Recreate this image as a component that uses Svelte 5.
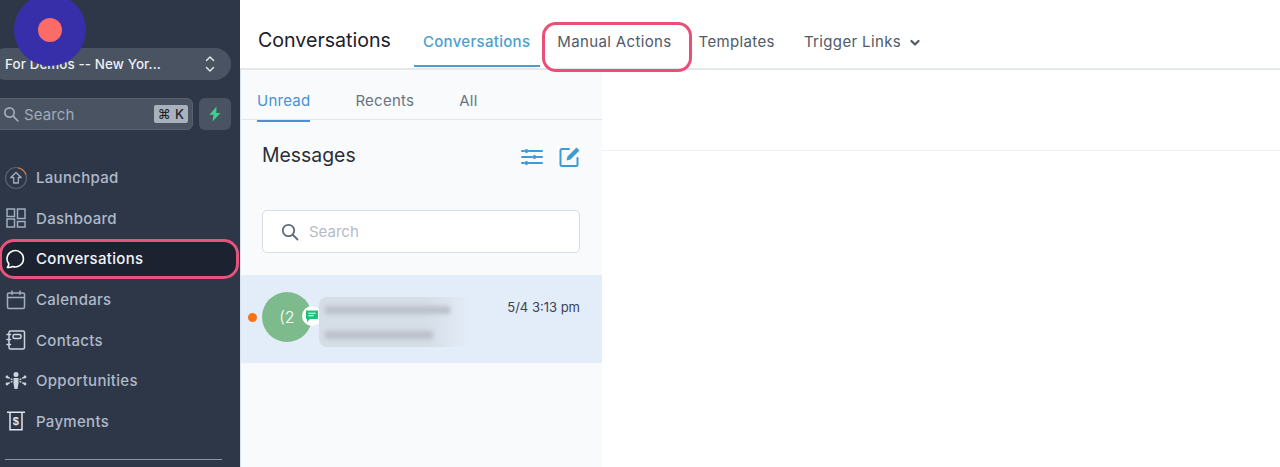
<script>
	const nav = [
		{ id: 'launchpad', label: 'Launchpad' },
		{ id: 'dashboard', label: 'Dashboard' },
		{ id: 'conversations', label: 'Conversations', active: true },
		{ id: 'calendars', label: 'Calendars' },
		{ id: 'contacts', label: 'Contacts' },
		{ id: 'opportunities', label: 'Opportunities' },
		{ id: 'payments', label: 'Payments' }
	];
	const tabs = ['Unread', 'Recents', 'All'];
</script>

<div class="page">
	<aside class="sidebar">
		<div class="switcher">
			<span class="switcher-name">For Demos -- New Yor...</span>
			<svg class="updown" viewBox="0 0 10 18" width="10" height="18" fill="none" stroke="currentColor" stroke-width="1.5" stroke-linecap="round" stroke-linejoin="round">
				<path d="M1.5 5.5 5 2l3.5 3.5M1.5 12.5 5 16l3.5-3.5" />
			</svg>
		</div>

		<div class="search-row">
			<div class="side-search">
				<svg viewBox="0 0 16 16" width="16" height="16" fill="none" stroke="currentColor" stroke-width="1.7" stroke-linecap="round">
					<circle cx="6.5" cy="6.5" r="4.7" /><path d="m10.2 10.2 4.6 4.6" />
				</svg>
				<span class="side-search-text">Search</span>
				<span class="kbd">⌘ K</span>
			</div>
			<div class="bolt">
				<svg viewBox="0 0 16 16" width="16" height="16"><path d="M9.500.5 2.500 8.800h4L5.500 15.500l8-8.600H9.300z" fill="#3ecf8e" /></svg>
			</div>
		</div>

		<nav class="nav">
			{#each nav as item}
				<div class="nav-item" class:active={item.active}>
					<span class="nav-icon">
						{#if item.id === 'launchpad'}
							<svg viewBox="0 0 24 24" width="24" height="24" fill="none">
								<circle cx="12" cy="12" r="10.5" stroke="#596373" stroke-width="1.2" />
								<path d="M14 1.800a10.500 10.500 0 0 1 8 7" stroke="#c9793f" stroke-width="1.2" />
								<path d="M12 6.500 6.800 11.500h2.900V17h4.600v-5.500h2.900z" stroke="#a0aec0" stroke-width="1.3" stroke-linejoin="round" />
							</svg>
						{:else if item.id === 'dashboard'}
							<svg viewBox="0 0 20 20" width="20" height="20" fill="none" stroke="#a0aec0" stroke-width="1.5">
								<rect x="1" y="1" width="7.500" height="7.500" /><rect x="11.500" y="1" width="7.500" height="9.500" />
								<rect x="1" y="11" width="7.500" height="8" /><rect x="11.500" y="13.500" width="7.500" height="5.500" />
							</svg>
						{:else if item.id === 'conversations'}
							<svg viewBox="0 0 20 20" width="20" height="20" fill="none" stroke="#fff" stroke-width="1.600" stroke-linejoin="round">
								<path d="M1.400 18.400c1-1.200 1.500-2.400 1.400-3.600A8.200 8.200 0 1 1 6.600 17.500c-1.600.8-3.300 1.100-5.200.9z" />
							</svg>
						{:else if item.id === 'calendars'}
							<svg viewBox="0 0 20 20" width="20" height="20" fill="none" stroke="#a0aec0" stroke-width="1.5" stroke-linecap="round">
								<rect x="1.500" y="3" width="17" height="15.500" rx="1.500" /><path d="M1.500 7.500h17M6 1v3.500M14 1v3.500" />
							</svg>
						{:else if item.id === 'contacts'}
							<svg viewBox="0 0 20 20" width="20" height="20" fill="none" stroke="#cbd5e0" stroke-width="1.5" stroke-linecap="round">
								<rect x="3" y="1" width="15.500" height="18" rx="1.500" /><rect x="7" y="4.500" width="8" height="4" rx="1.500" />
								<path d="M1 4.500h3.500M1 9.500h3.500M1 14.500h3.500" />
							</svg>
						{:else if item.id === 'opportunities'}
							<svg viewBox="0 0 22 20" width="22" height="20" fill="#cbd5e0" stroke="#cbd5e0">
								<circle cx="11" cy="3.500" r="2.500" stroke="none" />
								<path d="M8.500 7h5v5.500l-1 5.500h-3l-1-5.500z" stroke="none" />
								<circle cx="2" cy="6" r="1.400" stroke="none" /><circle cx="20" cy="6" r="1.400" stroke="none" />
								<circle cx="2" cy="13" r="1.400" stroke="none" /><circle cx="20" cy="13" r="1.400" stroke="none" />
								<path d="M3 6.500 8 9M19 6.500 14 9M3 12.500 8 10M19 12.500 14 10" fill="none" stroke-width="1.400" stroke-dasharray="2 1" />
							</svg>
						{:else}
							<svg viewBox="0 0 20 20" width="20" height="20" fill="none" stroke="#e2e8f0" stroke-width="1.5">
								<path d="M1 1.200h18M4 1.200v17.600h12V1.200" />
								<text x="10" y="14" text-anchor="middle" class="dollar">$</text>
							</svg>
						{/if}
					</span>
					<span>{item.label}</span>
				</div>
			{/each}
		</nav>

		<div class="side-divider"></div>
		<div class="recorder"><span class="recorder-dot"></span></div>
	</aside>

	<main class="main">
		<header class="topbar">
			<h1>Conversations</h1>
			<div class="toptabs">
				<span class="toptab current">Conversations</span>
				<span class="toptab marked">Manual Actions</span>
				<span class="toptab">Templates</span>
				<span class="toptab">Trigger Links
					<svg viewBox="0 0 10 8" width="10" height="8" fill="none" stroke="currentColor" stroke-width="2.200" stroke-linecap="round" stroke-linejoin="round"><path d="m1.500 2 3.500 3.500L8.500 2" /></svg>
				</span>
			</div>
		</header>

		<div class="body">
			<section class="panel">
				<div class="subtabs">
					{#each tabs as t, i}
						<span class="subtab" class:current={i === 0}>{t}</span>
					{/each}
				</div>

				<div class="messages-head">
					<h2>Messages</h2>
					<div class="head-icons">
						<svg viewBox="0 0 22 18" width="22" height="18" fill="none" stroke="#3f9bd6" stroke-width="2" stroke-linecap="round">
							<path d="M1 3h2M8 3h13M1 9h10M16 9h5M1 15h2M8 15h13" />
							<circle cx="5.500" cy="3" r="1.600" fill="#3f9bd6" stroke-width="1" /><circle cx="13.500" cy="9" r="1.600" fill="#3f9bd6" stroke-width="1" /><circle cx="5.500" cy="15" r="1.600" fill="#3f9bd6" stroke-width="1" />
						</svg>
						<svg viewBox="0 0 22 22" width="22" height="22" fill="none">
							<path d="M10 3H3a1.500 1.500 0 0 0-1.500 1.500v14A1.500 1.500 0 0 0 3 20h14a1.500 1.500 0 0 0 1.500-1.500V12" stroke="#3f9bd6" stroke-width="2" stroke-linecap="round" />
							<path d="M17.500 1.500 20.500 4.500 11.500 13.500 7.500 14.500 8.500 10.500z" fill="#3f9bd6" />
						</svg>
					</div>
				</div>

				<div class="msg-search">
					<svg viewBox="0 0 18 18" width="18" height="18" fill="none" stroke="#5f6b7a" stroke-width="1.800" stroke-linecap="round">
						<circle cx="7.500" cy="7.500" r="5.700" /><path d="m12 12 4.500 4.500" />
					</svg>
					<span>Search</span>
				</div>

				<div class="thread">
					<span class="unread"></span>
					<div class="avatar">
						(2
						<span class="channel">
							<svg viewBox="0 0 14 14" width="14" height="14"><path d="M1 1.500h12v8.500H5l-3 3V10H1z" fill="#22c17a" /><path d="M3.500 4.200h7M3.500 6.800h5" stroke="#fff" stroke-width="1.100" /></svg>
						</span>
					</div>
					<div class="blurred">
						<span class="blur-line"></span>
						<span class="blur-line short"></span>
					</div>
					<span class="time">5/4 3:13 pm</span>
				</div>
			</section>

			<section class="detail">
				<div class="detail-head"></div>
			</section>
		</div>
	</main>
</div>

<style>
	:global(body) {
		margin: 0;
		background: #fff;
	}
	.page {
		display: flex;
		width: 1280px;
		height: 467px;
		overflow: hidden;
		font-family: Inter, 'Noto Sans', sans-serif;
		position: relative;
	}

	.sidebar {
		position: relative;
		width: 240px;
		flex: none;
		background: #2d3748;
		box-sizing: border-box;
		padding-top: 48px;
		overflow: hidden;
	}
	.switcher {
		display: flex;
		align-items: center;
		justify-content: space-between;
		height: 32px;
		margin: 0 9px 0 -10px;
		padding: 0 16px 0 15px;
		background: #4a5361;
		border-radius: 16px;
		color: #edf0f4;
		font-size: 13.4px;
		font-weight: 500;
		letter-spacing: 0.1px;
	}
	.updown {
		color: #dfe4ea;
	}
	.search-row {
		display: flex;
		gap: 6px;
		margin: 18px 9px 0 -10px;
	}
	.side-search {
		flex: 1;
		display: flex;
		align-items: center;
		height: 32px;
		box-sizing: border-box;
		padding: 0 4px 0 12px;
		background: #4a5361;
		border: 1px solid #566070;
		border-radius: 6px;
		color: #a0aab8;
	}
	.side-search-text {
		flex: 1;
		margin-left: 5px;
		font-size: 15px;
		letter-spacing: 0.1px;
	}
	.kbd {
		background: #a9b1bc;
		color: #20262f;
		font-size: 13px;
		font-weight: 500;
		padding: 1px 4px;
		border-radius: 2px;
		line-height: 16px;
		word-spacing: 1px;
	}
	.bolt {
		width: 32px;
		height: 32px;
		display: flex;
		align-items: center;
		justify-content: center;
		background: #4a5361;
		border-radius: 6px;
	}

	.nav {
		margin-top: 27.5px;
		display: flex;
		flex-direction: column;
	}
	.nav-item {
		display: flex;
		align-items: center;
		height: 40.6px;
		padding-left: 4px;
		color: #afb9c8;
		font-size: 15px;
		font-weight: 500;
		letter-spacing: 0.3px;
	}
	.nav-icon {
		width: 24px;
		display: flex;
		justify-content: center;
		margin-right: 8px;
	}
	.nav-item.active {
		color: #f2f5f9;
		background: #1c2230;
		outline: 3px solid #e4547c;
		outline-offset: -3px;
		border-radius: 15px;
		margin: 0 1px 0 -1px;
		padding-left: 5px;
	}
	.dollar {
		font-family: 'Liberation Sans', sans-serif;
		font-size: 11px;
		font-weight: 700;
		fill: #e2e8f0;
		stroke: none;
	}
	.side-divider {
		height: 1px;
		margin: 17.5px 18px 0 5px;
		background: #8a94a3;
	}
	.recorder {
		position: absolute;
		left: 14px;
		top: -6px;
		width: 72px;
		height: 72px;
		border-radius: 50%;
		background: #372faa;
		display: flex;
		align-items: center;
		justify-content: center;
	}
	.recorder-dot {
		width: 24px;
		height: 24px;
		border-radius: 50%;
		background: #fb6b68;
	}

	.main {
		flex: 1;
		display: flex;
		flex-direction: column;
		min-width: 0;
	}
	.topbar {
		display: flex;
		height: 70px;
		flex: none;
		box-sizing: border-box;
		padding-left: 18px;
		border-bottom: 2px solid #e4e7eb;
		background: #fff;
	}
	h1 {
		margin: 27px 23px 0 0;
		font-size: 19.6px;
		line-height: 26px;
		font-weight: 400;
		color: #1b2028;
	}
	.toptabs {
		display: flex;
		height: 67px;
	}
	.toptab {
		position: relative;
		padding: 32px 14px 0;
		font-size: 15px;
		line-height: 20px;
		color: #4f5a67;
		white-space: nowrap;
		letter-spacing: 0.36px;
	}
	.toptab svg {
		margin-left: 4px;
	}
	.toptab.current {
		padding: 32px 10px 0 9px;
		color: #4a9fd0;
		font-weight: 500;
		border-bottom: 2px solid #4a9fd0;
		height: 33px;
		letter-spacing: 0.3px;
	}
	.toptab.marked {
		margin-left: 2px;
		padding: 32px 20px 0 15px;
	}
	.toptab.marked::after {
		content: '';
		position: absolute;
		inset: 22px 0 -5px;
		border: 3px solid #e8507a;
		border-radius: 14px;
	}
	.toptab.marked + .toptab {
		padding: 32px 15px 0 7px;
	}

	.body {
		flex: 1;
		display: flex;
		min-height: 0;
	}
	.panel {
		width: 362px;
		flex: none;
		background: #f8fafc;
		border-left: 1px solid #dbe3ea;
		box-sizing: border-box;
	}
	.subtabs {
		display: flex;
		gap: 45px;
		height: 50px;
		box-sizing: border-box;
		padding-left: 16px;
		border-bottom: 1px solid #e2e7ec;
	}
	.subtab {
		padding-top: 21px;
		height: 29px;
		font-size: 15px;
		line-height: 20px;
		color: #6b7480;
		letter-spacing: 0.25px;
	}
	.subtab.current {
		color: #4a90d6;
		border-bottom: 2px solid #4a90d6;
	}
	.messages-head {
		display: flex;
		align-items: center;
		justify-content: space-between;
		padding: 22px 21px 0 21px;
	}
	h2 {
		margin: 0 0 3px;
		font-size: 19.4px;
		line-height: 26px;
		font-weight: 400;
		color: #2a2f37;
	}
	.head-icons {
		display: flex;
		align-items: center;
		gap: 16px;
	}
	.msg-search {
		display: flex;
		align-items: center;
		gap: 10px;
		height: 43px;
		margin: 39px 22px 0 21px;
		padding-left: 18px;
		background: #fff;
		border: 1px solid #d8dde3;
		border-radius: 5px;
		box-sizing: border-box;
		font-size: 15px;
		color: #b4bcc6;
	}
	.thread {
		position: relative;
		display: flex;
		align-items: flex-start;
		height: 88px;
		margin-top: 22px;
		background: #e3edf9;
	}
	.unread {
		width: 9px;
		height: 9px;
		border-radius: 50%;
		background: #f97316;
		margin: 38px 0 0 7px;
	}
	.avatar {
		position: relative;
		width: 50px;
		height: 50px;
		margin: 17px 0 0 5px;
		border-radius: 50%;
		background: #7dbb8d;
		color: #fff;
		font-size: 16px;
		line-height: 50px;
		text-align: center;
		font-weight: 300;
	}
	.channel {
		position: absolute;
		right: -10px;
		top: 14px;
		width: 20px;
		height: 20px;
		border-radius: 50%;
		background: #fff;
		display: flex;
		align-items: center;
		justify-content: center;
	}
	.blurred {
		width: 152px;
		height: 50px;
		margin: 22px 0 0 7px;
		padding: 9px 0 0 6px;
		box-sizing: border-box;
		border-radius: 8px;
		background: linear-gradient(90deg, #d5dde6 70%, #e3edf9);
		display: flex;
		flex-direction: column;
		gap: 17px;
		position: relative;
		z-index: 1;
	}
	.blur-line {
		height: 8px;
		width: 125px;
		background: #bbc1ca;
		filter: blur(2px);
	}
	.blur-line.short {
		width: 108px;
	}
	.time {
		position: absolute;
		right: 22px;
		top: 24px;
		font-size: 13px;
		line-height: 16px;
		color: #3a4350;
	}
	.detail {
		flex: 1;
		background: #fff;
	}
	.detail-head {
		height: 80px;
		border-bottom: 1px solid #eff1f3;
	}
</style>
